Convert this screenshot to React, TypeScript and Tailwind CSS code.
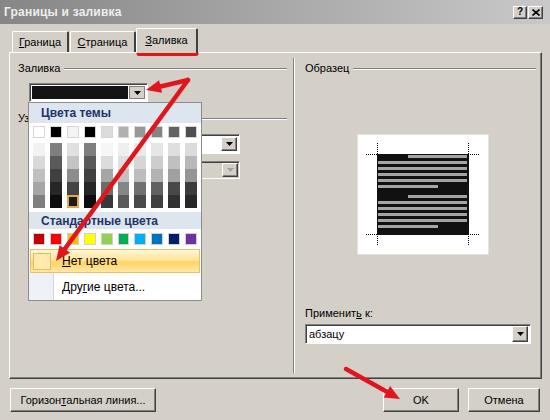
import React from 'react';

const raised =
  'border border-t-white border-l-white border-r-[#404040] border-b-[#404040] shadow-[inset_-1px_-1px_0_#808080]';
const sunken =
  'border border-t-[#808080] border-l-[#808080] border-r-white border-b-white shadow-[inset_1px_1px_0_#404040]';

const themeTop = ['#ffffff', '#000000', '#f4f4f4', '#000000', '#dcdcdc', '#b0b0b0', '#989898', '#848484', '#626262', '#4e4e4e'];

const themeCols = [
  ['#f2f2f2', '#d9d9d9', '#bfbfbf', '#a6a6a6', '#7f7f7f'],
  ['#7f7f7f', '#595959', '#404040', '#262626', '#0d0d0d'],
  ['#e0e0e0', '#c4c4c4', '#8c8c8c', '#444444', '#1c1a1a'],
  ['#7f7f7f', '#595959', '#404040', '#262626', '#0d0d0d'],
  ['#f6f6f6', '#dcdcdc', '#a6a6a6', '#6c6c6c', '#383838'],
  ['#efefef', '#dfdfdf', '#c2c2c2', '#868686', '#5a5a5a'],
  ['#eaeaea', '#d6d6d6', '#bdbdbd', '#707070', '#4a4a4a'],
  ['#e6e6e6', '#cdcdcd', '#b3b3b3', '#616161', '#404040'],
  ['#dfdfdf', '#c0c0c0', '#a0a0a0', '#484848', '#303030'],
  ['#dbdbdb', '#b8b8b8', '#959595', '#3b3b3b', '#272727'],
];

const standard = ['#c00000', '#ff0000', '#ffc000', '#ffff00', '#92d050', '#00b050', '#00b0f0', '#0070c0', '#002060', '#7030a0'];

function Tri({ color = '#000' }: { color?: string }) {
  return (
    <svg width="7" height="4" viewBox="0 0 7 4">
      <path d="M0 0h7L3.5 4z" fill={color} />
    </svg>
  );
}

function DropButton({ pressed, disabled }: { pressed?: boolean; disabled?: boolean }) {
  return (
    <div
      className={
        'w-[16px] h-full flex items-center justify-center bg-[#d4d0c8] ' +
        (pressed ? 'border border-[#808080]' : raised)
      }
    >
      <Tri color={disabled ? '#a0a0a0' : '#000'} />
    </div>
  );
}

function GroupLabel({ text }: { text: string }) {
  return (
    <div className="flex items-center gap-[4px] h-[13px]">
      <span className="leading-none">{text}</span>
      <div className="flex-1 h-[2px] border-t border-t-[#808080] border-b border-b-white" />
    </div>
  );
}

function Arrow({ x1, y1, x2, y2 }: { x1: number; y1: number; x2: number; y2: number }) {
  const a = Math.atan2(y2 - y1, x2 - x1);
  const L = 15;
  const W = 6.5;
  const bx = x2 - L * Math.cos(a);
  const by = y2 - L * Math.sin(a);
  const px = -Math.sin(a) * W;
  const py = Math.cos(a) * W;
  return (
    <g>
      <line x1={x1} y1={y1} x2={bx} y2={by} stroke="#e0161e" strokeWidth="4.5" strokeLinecap="round" />
      <polygon points={`${x2},${y2} ${bx + px},${by + py} ${bx - px},${by - py}`} fill="#e0161e" />
    </g>
  );
}

function Preview() {
  const lines: { y: number; x1: number; x2: number }[] = [];
  const para = (start: number) => {
    lines.push({ y: start, x1: 31, x2: 90 });
    for (let i = 1; i < 5; i++) lines.push({ y: start + i * 6, x1: 1, x2: 90 });
    lines.push({ y: start + 30, x1: 1, x2: 61 });
  };
  para(1);
  para(47 - 6);
  const corner = (x: number, y: number, dx: number, dy: number, key: string) => (
    <g key={key} stroke="#000" strokeWidth="1" strokeDasharray="1 1">
      <line x1={x + dx * 11} y1={y + 0.5} x2={x} y2={y + 0.5} />
      <line x1={x + 0.5} y1={y + dy * 11} x2={x + 0.5} y2={y} />
    </g>
  );
  return (
    <svg width="132" height="121" viewBox="0 0 132 121" className="block">
      <rect x="0.5" y="0.5" width="131" height="120" fill="#fff" stroke="#e4e2dc" />
      <rect x="20" y="20" width="92" height="81" fill="#111" />
      {lines.map((l, i) => (
        <rect key={i} x={20 + l.x1} y={20 + l.y} width={l.x2 - l.x1} height="3" fill="#a4a4a4" />
      ))}
      {corner(20, 20, -1, -1, 'tl')}
      {corner(111, 20, 1, -1, 'tr')}
      {corner(20, 100, -1, 1, 'bl')}
      {corner(111, 100, 1, 1, 'br')}
    </svg>
  );
}

function ColorPopup() {
  return (
    <div className="absolute left-[28px] top-[102px] w-[174px] h-[199px] bg-white border border-[#8d8d8d] font-['Liberation_Sans',Arial,sans-serif] text-[12px] flex flex-col">
      <div className="h-[20px] bg-[#dde5ee] flex items-center pl-[12px] font-bold text-[#1c3466]">Цвета темы</div>
      <div className="flex gap-[5px] px-[4px] mt-[3px]">
        {themeTop.map((c, i) => (
          <div key={i} className="w-[12px] h-[12px] border border-[#d6d6d6]" style={{ backgroundColor: c }} />
        ))}
      </div>
      <div className="flex gap-[5px] px-[4px] mt-[5px]">
        {themeCols.map((col, i) => (
          <div key={i} className="w-[12px] flex flex-col">
            {col.map((c, j) =>
              i === 2 && j === 4 ? (
                <div key={j} className="h-[13px] border-2 border-[#e3a64a]" style={{ backgroundColor: c }} />
              ) : (
                <div key={j} className="h-[13px]" style={{ backgroundColor: c }} />
              ),
            )}
          </div>
        ))}
      </div>
      <div className="h-[17px] mt-[4px] bg-[#dde5ee] flex items-center pl-[12px] font-bold text-[#1c3466]">
        Стандартные цвета
      </div>
      <div className="flex gap-[5px] px-[4px] mt-[4px]">
        {standard.map((c, i) => (
          <div key={i} className="w-[12px] h-[12px] border border-[#d0d0d0]" style={{ backgroundColor: c }} />
        ))}
      </div>
      <div className="mt-[4px] h-[24px] mx-[1px] flex items-center border border-[#e5c169] bg-[linear-gradient(#fff7d6,#ffe49a_45%,#ffd463_55%,#ffe7a6)]">
        <div className="ml-[2px] w-[18px] h-[17px] border border-[#e2bb62] bg-[#ffe9ad]" />
        <span className="ml-[11px]">
          <span className="underline">Н</span>ет цвета
        </span>
      </div>
      <div className="flex-1 flex">
        <div className="w-[25px] bg-[#eef1f5] border-r border-[#d5d9df]" />
        <div className="flex items-center pl-[8px]">
          Дру<span className="underline">г</span>ие цвета...
        </div>
      </div>
    </div>
  );
}

export default function App() {
  return (
    <div className="relative w-[550px] h-[420px] overflow-hidden bg-[#d4d0c8] font-['Liberation_Sans',Arial,sans-serif] text-[11px] text-black">
      {/* title bar */}
      <div className="h-[24px] flex items-center justify-between pl-[4px] pr-[7px] bg-[linear-gradient(90deg,#868686,#c9c9c9)]">
        <span className="text-[12px] font-bold text-[#eeeeee] tracking-[0.2px]">Границы и заливка</span>
        <div className="flex gap-[1px]">
          <div className={'w-[14px] h-[13px] bg-[#d4d0c8] flex items-center justify-center text-[10px] font-bold leading-none ' + raised}>
            ?
          </div>
          <div className={'w-[15px] h-[13px] bg-[#d4d0c8] flex items-center justify-center ' + raised}>
            <svg width="8" height="7" viewBox="0 0 8 7">
              <path d="M0.5 0.5l7 6M7.5 0.5l-7 6" stroke="#000" strokeWidth="1.6" />
            </svg>
          </div>
        </div>
      </div>

      <div className="pl-[9px] pr-[8px]">
        {/* tabs */}
        <div className="h-[28px] flex items-end pl-[3px]">
          <div className="h-[21px] w-[57px] border-t border-l border-t-white border-l-white border-r-2 border-r-[#404040] rounded-t-[2px] flex items-center justify-center">
            <span>
              <span className="underline">Г</span>раница
            </span>
          </div>
          <div className="h-[21px] w-[66px] ml-[1px] border-t border-l border-t-white border-l-white border-r-2 border-r-[#404040] rounded-t-[2px] flex items-center justify-center">
            <span>
              <span className="underline">С</span>траница
            </span>
          </div>
          <div className="relative z-10 -mb-px h-[25px] w-[62px] bg-[#d4d0c8] border-t border-l border-t-white border-l-white border-r-2 border-r-[#404040] rounded-t-[2px] flex items-center justify-center pb-[2px]">
            <span>
              <span className="underline">З</span>аливка
            </span>
          </div>
        </div>

        {/* panel */}
        <div className="h-[327px] flex border border-t-white border-l-white border-r-[#404040] border-b-[#404040] shadow-[inset_-1px_-1px_0_#808080]">
          <div className="w-[283px] pl-[8px] pr-[6px] pt-[9px] flex flex-col">
            <GroupLabel text="Заливка" />
            <div className={'mt-[8px] ml-[11px] w-[119px] h-[19px] bg-white flex p-[2px] ' + sunken}>
              <div className="flex-1 bg-[#141414] mr-[1px]" />
              <DropButton pressed />
            </div>
            <div className="mt-[10px]">
              <GroupLabel text="Узор" />
            </div>
            <div className="flex items-center mt-[9px] ml-[11px]">
              <span className="w-[72px]">Тип:</span>
              <div className={'w-[139px] h-[20px] bg-white flex justify-end p-[2px] ' + sunken}>
                <DropButton />
              </div>
            </div>
            <div className="flex items-center mt-[7px] ml-[11px]">
              <span className="w-[72px]">Цвет:</span>
              <div className={'w-[139px] h-[18px] bg-[#d4d0c8] flex justify-end p-[1px] ' + sunken}>
                <DropButton disabled />
              </div>
            </div>
          </div>

          <div className="w-[2px] my-[5px] border-l border-l-[#808080] border-r border-r-white" />

          <div className="flex-1 pl-[10px] pr-[5px] pt-[9px] flex flex-col">
            <GroupLabel text="Образец" />
            <div className="mt-[59px] ml-[52px]">
              <Preview />
            </div>
            <div className="mt-[51px] h-[14px] leading-[14px]">
              Применит<span className="underline">ь</span> к:
            </div>
            <div className={'mt-[4px] mr-[5px] h-[20px] bg-white flex items-center pl-[3px] pr-[2px] ' + sunken}>
              <span className="flex-1">абзацу</span>
              <div className="h-[16px]">
                <DropButton />
              </div>
            </div>
          </div>
        </div>

        {/* buttons */}
        <div className="mt-[9px] flex items-center">
          <div className={'ml-[1px] w-[146px] h-[24px] flex items-center justify-center ' + raised}>
            <span>
              Горизон<span className="underline">т</span>альная линия...
            </span>
          </div>
          <div className="flex-1" />
          <div className={'w-[76px] h-[24px] flex items-center justify-center ' + raised}>OK</div>
          <div className={'ml-[9px] mr-[2px] w-[72px] h-[24px] flex items-center justify-center ' + raised}>Отмена</div>
        </div>
      </div>

      <ColorPopup />

      {/* annotations */}
      <svg className="absolute inset-0 pointer-events-none" width="550" height="420" viewBox="0 0 550 420">
        <line x1="139" y1="53.5" x2="196" y2="53.5" stroke="#e0161e" strokeWidth="5" strokeLinecap="round" />
        <Arrow x1={188} y1={80} x2={146} y2={90} />
        <Arrow x1={188} y1={80} x2={56} y2={261} />
        <Arrow x1={346} y1={369} x2={400} y2={399} />
      </svg>
    </div>
  );
}
